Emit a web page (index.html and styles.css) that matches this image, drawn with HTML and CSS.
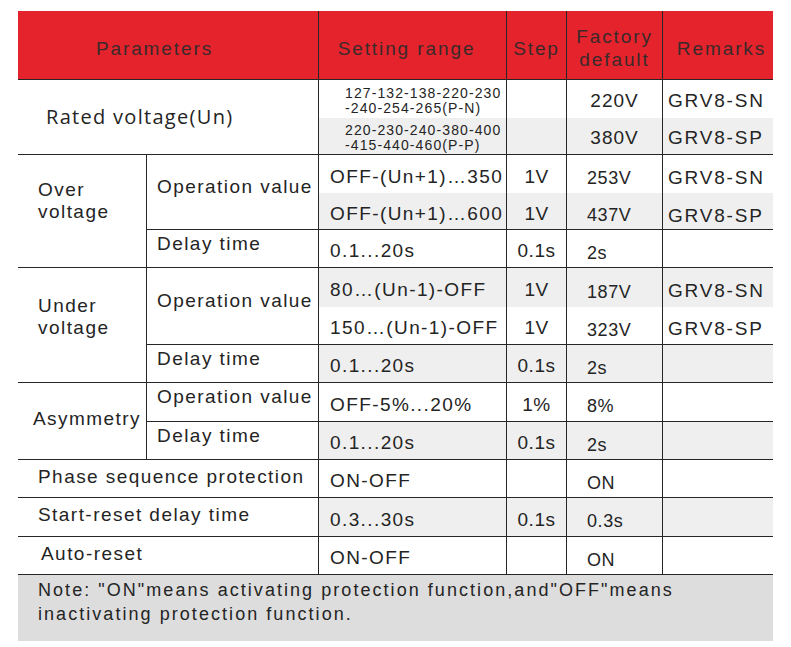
FILE: index.html
```html
<!DOCTYPE html>
<html lang="en">
<head>
<meta charset="utf-8">
<title>Parameters</title>
<link rel="stylesheet" href="styles.css">
</head>
<body>
<div class="sheet">
  <div class="grid" role="table">
    <div class="c h s2c h-par">Parameters</div>
    <div class="c h h-set">Setting range</div>
    <div class="c h">Step</div>
    <div class="c h h-fac">Factory<br>default</div>
    <div class="c h last h-rem">Remarks</div>

    <div class="c s2c s2r rated">Rated voltage(Un)</div>
    <div class="c open small">127-132-138-220-230<br>-240-254-265(P-N)</div>
    <div class="c open st"></div>
    <div class="c open fd ctr">220V</div>
    <div class="c open last rm rtop">GRV8-SN</div>
    <div class="c g small">220-230-240-380-400<br>-415-440-460(P-P)</div>
    <div class="c g st"></div>
    <div class="c g fd ctr">380V</div>
    <div class="c g last rm rtop">GRV8-SP</div>

    <div class="c s3r a grp">Over<br>voltage</div>
    <div class="c s2r b">Operation value</div>
    <div class="c open r">OFF-(Un+1)…350</div>
    <div class="c open st">1V</div>
    <div class="c open fd">253V</div>
    <div class="c open last rm">GRV8-SN</div>
    <div class="c g r">OFF-(Un+1)…600</div>
    <div class="c g st">1V</div>
    <div class="c g fd">437V</div>
    <div class="c g last rm low">GRV8-SP</div>
    <div class="c b">Delay time</div>
    <div class="c r">0.1...20s</div>
    <div class="c st">0.1s</div>
    <div class="c fd">2s</div>
    <div class="c last rm"></div>

    <div class="c s3r a grp under">Under<br>voltage</div>
    <div class="c s2r b">Operation value</div>
    <div class="c open g r">80…(Un-1)-OFF</div>
    <div class="c open g st">1V</div>
    <div class="c open g fd">187V</div>
    <div class="c open g last rm">GRV8-SN</div>
    <div class="c r">150…(Un-1)-OFF</div>
    <div class="c st">1V</div>
    <div class="c fd">323V</div>
    <div class="c last rm">GRV8-SP</div>
    <div class="c b">Delay time</div>
    <div class="c g r">0.1...20s</div>
    <div class="c g st">0.1s</div>
    <div class="c g fd">2s</div>
    <div class="c g last rm"></div>

    <div class="c s2r a asym">Asymmetry</div>
    <div class="c b">Operation value</div>
    <div class="c r">OFF-5%...20%</div>
    <div class="c st">1%</div>
    <div class="c fd">8%</div>
    <div class="c last rm"></div>
    <div class="c b">Delay time</div>
    <div class="c g r">0.1...20s</div>
    <div class="c g st">0.1s</div>
    <div class="c g fd">2s</div>
    <div class="c g last rm"></div>

    <div class="c s2c a single">Phase sequence protection</div>
    <div class="c r">ON-OFF</div>
    <div class="c st"></div>
    <div class="c fd">ON</div>
    <div class="c last rm"></div>

    <div class="c s2c a single">Start-reset delay time</div>
    <div class="c g r">0.3...30s</div>
    <div class="c g st">0.1s</div>
    <div class="c g fd">0.3s</div>
    <div class="c g last rm"></div>

    <div class="c s2c a single auto">Auto-reset</div>
    <div class="c r">ON-OFF</div>
    <div class="c st"></div>
    <div class="c fd">ON</div>
    <div class="c last rm"></div>

    <div class="note">Note: "ON"means activating protection function,and"OFF"means<br>inactivating protection function.</div>
  </div>
</div>
</body>
</html>
```

FILE: styles.css
```css
body {
  margin: 0;
  background: #ffffff;
  font-family: "Liberation Sans", Arial, sans-serif;
  color: #242424;
}

.sheet {
  padding: 11px 18px;
}

.grid {
  display: grid;
  width: 755px;
  grid-template-columns: 129px 172px 188px 60px 96px 110px;
  grid-template-rows: 69px 38px 37px 38px 37px 38px 39px 38px 38px 39px 38px 38px 39px 38px 66px;
}

.c {
  display: flex;
  align-items: center;
  box-sizing: border-box;
  border-right: 1px solid #262626;
  border-bottom: 1px solid #262626;
  font-size: 19px;
  line-height: 22px;
  letter-spacing: 1.45px;
  white-space: nowrap;
}

.last { border-right: none; }
.open { border-bottom: none; }
.g { background: #efefef; }

.s2c { grid-column: span 2; }
.s2r { grid-row: span 2; }
.s3r { grid-row: span 3; }

/* header */
.h {
  background: #e5232c;
  color: #3a2a2b;
  justify-content: center;
  text-align: center;
  padding-top: 6px;
  letter-spacing: 1.9px;
  line-height: 23px;
}
.h-par { padding-right: 27px; }
.h-set { padding-right: 12px; }
.h-rem { padding-left: 7px; }

/* parameter column */
.a { padding-left: 20px; }
.grp { padding-bottom: 20px; }
.under { padding-bottom: 16px; }
.asym { padding-left: 15px; padding-bottom: 5px; }
.single { padding-bottom: 4px; }
.auto { padding-left: 23px; }

.rated {
  font-family: "Open Sans", "Liberation Sans", sans-serif;
  font-size: 20px;
  letter-spacing: 1.3px;
  padding-left: 28px;
}

.b { padding-left: 10px; padding-bottom: 10px; }

/* setting range */
.r { padding-left: 11px; padding-top: 5px; letter-spacing: 1.4px; }
.small {
  font-size: 14px;
  line-height: 15px;
  letter-spacing: 1.1px;
  padding-left: 26px;
  padding-top: 4px;
}

/* step */
.st { justify-content: center; padding-top: 5px; letter-spacing: 0.5px; }

/* factory default */
.fd { padding-left: 20px; padding-top: 8px; font-size: 18px; letter-spacing: 0.6px; }
.fd.ctr { justify-content: center; padding-left: 0; padding-top: 3px; font-size: 19px; letter-spacing: 1px; }

/* remarks */
.rm { padding-left: 5px; padding-top: 7px; letter-spacing: 1.8px; }
.rm.rtop { padding-top: 3px; }
.rm.low { padding-top: 10px; }

.note {
  grid-column: span 6;
  background: #dddddd;
  font-size: 18px;
  line-height: 23.5px;
  letter-spacing: 2.05px;
  padding: 4px 20px 0;
  white-space: nowrap;
}
```
